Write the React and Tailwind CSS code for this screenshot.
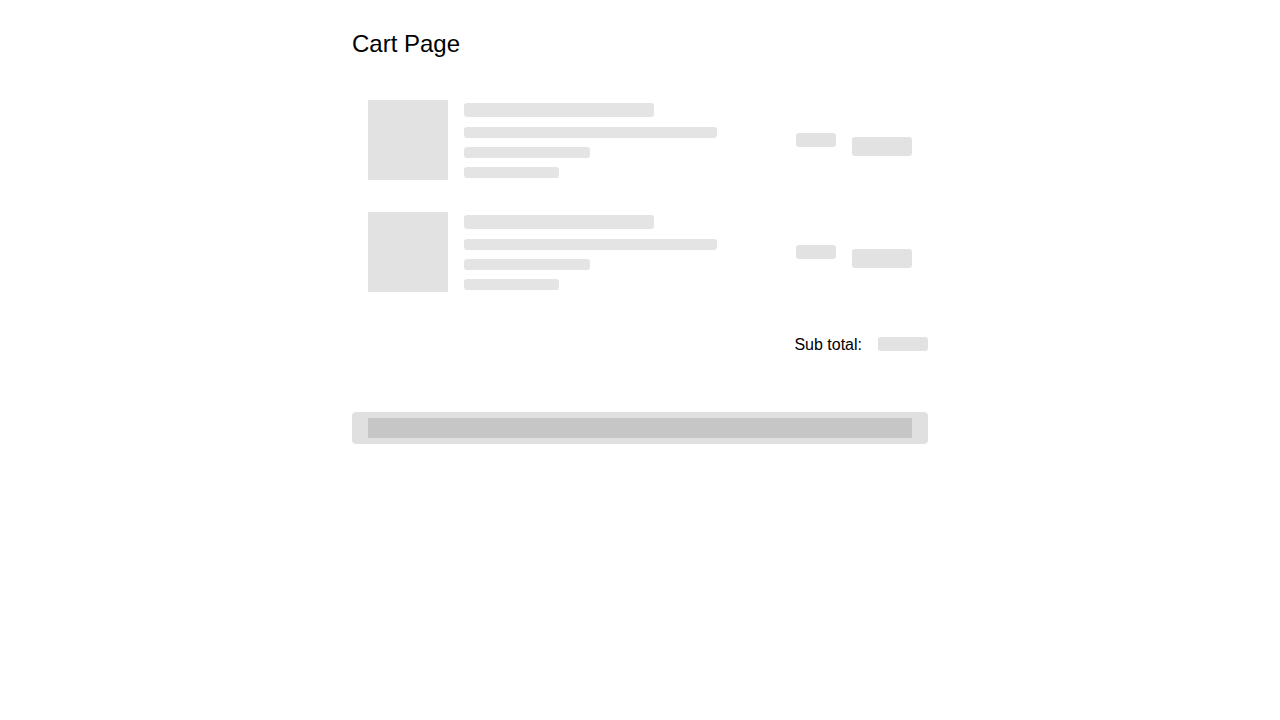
export default function App() {
  const items = [1, 2];

  return (
    <div className="min-h-screen bg-white" style={{ fontFamily: '"Liberation Sans", Arial, sans-serif' }}>
      <div className="w-[576px] mx-auto pt-[28px]">
        {/* Header */}
        <h1 className="text-2xl leading-8 text-black">Cart Page</h1>

        {/* Items */}
        <div className="mt-6">
          {items.map((id) => (
            <div key={id} className="flex p-4">
              <div className="w-20 h-20 bg-[#e2e2e2] shrink-0" />
              <div className="ml-4 w-[253px] flex flex-col pt-[3px]">
                <div className="w-[190px] h-[14px] rounded-[3px] bg-[#e4e4e4]" />
                <div className="w-[253px] h-[11px] mt-[10px] rounded-[3px] bg-[#e4e4e4]" />
                <div className="w-[126px] h-[11px] mt-[9px] rounded-[3px] bg-[#e4e4e4]" />
                <div className="w-[95px] h-[11px] mt-[9px] rounded-[3px] bg-[#e4e4e4]" />
              </div>
              <div className="ml-auto flex gap-4 items-start">
                <div className="w-10 h-[14px] mt-[33px] rounded-[3px] bg-[#e2e2e2]" />
                <div className="w-[60px] h-[19px] mt-[37px] rounded-[3px] bg-[#e2e2e2]" />
              </div>
            </div>
          ))}
        </div>

        {/* Sub total */}
        <div className="mt-6 flex justify-end items-center gap-4 h-6">
          <span className="text-base text-black translate-y-px">Sub total:</span>
          <div className="w-[50px] h-[14px] rounded-[3px] bg-[#e2e2e2]" />
        </div>

        {/* Checkout button */}
        <div className="mt-14 h-8 rounded bg-[#e0e0e0] px-4 py-[6px]">
          <div className="h-5 bg-[#c6c6c6]" />
        </div>
      </div>
    </div>
  );
}
